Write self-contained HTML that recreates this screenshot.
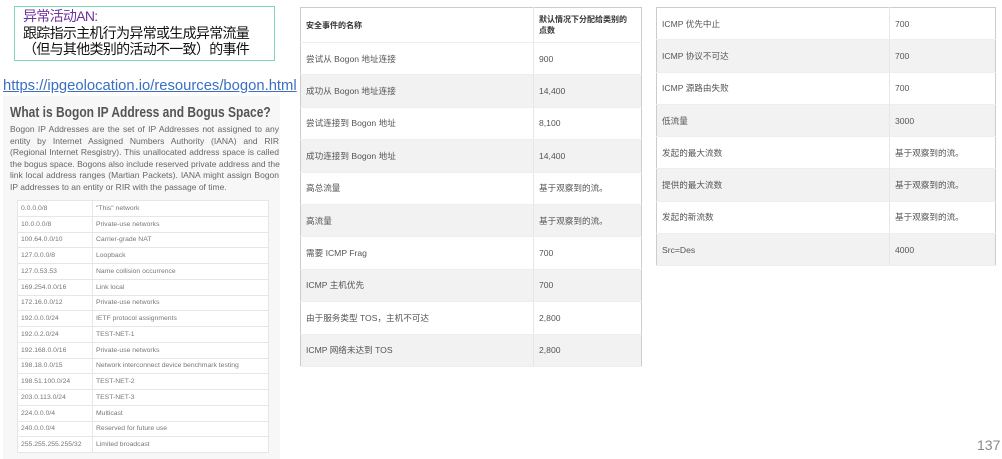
<!DOCTYPE html>
<html><head><meta charset="utf-8"><style>
*{margin:0;padding:0;box-sizing:border-box}
body{width:1002px;height:459px;background:#fff;position:relative;overflow:hidden;font-family:"Liberation Sans","Noto Sans CJK SC",sans-serif}
.box{position:absolute;left:14px;top:6px;width:261px;height:55px;border:1.5px solid #7fd6b2;padding:1px 8px;font-size:14px;line-height:16.5px;color:#111;white-space:nowrap;letter-spacing:-0.7px}
.box .p{color:#7030a0}
.link{position:absolute;left:3px;top:78px;font-size:14.8px;color:#3a6fc4;text-decoration:underline;white-space:nowrap}
.panel{position:absolute;left:3px;top:96px;width:277px;height:363px;background:#f7f7f7}
.title{position:absolute;left:10px;top:104px;font-size:12px;font-weight:bold;color:#555;white-space:nowrap;transform:scaleY(1.2);transform-origin:0 0}
.para{position:absolute;left:10px;top:124px;width:269px;font-size:8.5px;line-height:11.5px;color:#666}
.para div{text-align:justify;text-align-last:justify;white-space:nowrap}
.para div.l{text-align-last:left}
table{border-collapse:collapse;position:absolute}
.lt{left:17px;top:200px;width:252px;background:#fff;font-size:6.8px;color:#777}
.lt td{height:15.75px;border:1px solid #e6e6e6;padding-left:3px}
.lt td:first-child{width:75px}
.mt{left:300px;top:7px;width:342px;border:1.5px solid #ccc;font-size:8.6px;color:#555}
.mt td{height:32.4px;padding-left:5px;border-bottom:1px solid #eee}
.mt td:first-child{width:233px;border-right:1px solid #e6e6e6}
.mt tr.h td{height:35px;font-weight:bold;color:#333;font-size:8px}
.g td{background:#f2f2f2}
.rt{left:656px;top:7px;width:340px;border:1.5px solid #ccc;font-size:8.6px;color:#555}
.rt td{height:32.3px;padding-left:5px;border-bottom:1px solid #eee}
.rt td:first-child{width:233px;border-right:1px solid #e6e6e6}
.num{position:absolute;left:977px;top:437px;font-size:14px;color:#888}
</style></head><body>
<div class="box"><div class="p">异常活动AN:</div><div>跟踪指示主机行为异常或生成异常流量</div><div>（但与其他类别的活动不一致）的事件</div></div>
<div class="link">https://ipgeolocation.io/resources/bogon.html</div>
<div class="panel"></div>
<div class="title">What is Bogon IP Address and Bogus Space?</div>
<div class="para">
<div>Bogon IP Addresses are the set of IP Addresses not assigned to any</div>
<div>entity by Internet Assigned Numbers Authority (IANA) and RIR</div>
<div>(Regional Internet Resgistry). This unallocated address space is called</div>
<div>the bogus space. Bogons also include reserved private address and the</div>
<div>link local address ranges (Martian Packets). IANA might assign Bogon</div>
<div class="l">IP addresses to an entity or RIR with the passage of time.</div>
</div>
<table class="lt">
<tr><td>0.0.0.0/8</td><td>"This" network</td></tr>
<tr><td>10.0.0.0/8</td><td>Private-use networks</td></tr>
<tr><td>100.64.0.0/10</td><td>Carrier-grade NAT</td></tr>
<tr><td>127.0.0.0/8</td><td>Loopback</td></tr>
<tr><td>127.0.53.53</td><td>Name collision occurrence</td></tr>
<tr><td>169.254.0.0/16</td><td>Link local</td></tr>
<tr><td>172.16.0.0/12</td><td>Private-use networks</td></tr>
<tr><td>192.0.0.0/24</td><td>IETF protocol assignments</td></tr>
<tr><td>192.0.2.0/24</td><td>TEST-NET-1</td></tr>
<tr><td>192.168.0.0/16</td><td>Private-use networks</td></tr>
<tr><td>198.18.0.0/15</td><td>Network interconnect device benchmark testing</td></tr>
<tr><td>198.51.100.0/24</td><td>TEST-NET-2</td></tr>
<tr><td>203.0.113.0/24</td><td>TEST-NET-3</td></tr>
<tr><td>224.0.0.0/4</td><td>Multicast</td></tr>
<tr><td>240.0.0.0/4</td><td>Reserved for future use</td></tr>
<tr><td>255.255.255.255/32</td><td>Limited broadcast</td></tr>
</table>
<table class="mt">
<tr class="h"><td>安全事件的名称</td><td>默认情况下分配给类别的<br>点数</td></tr>
<tr><td>尝试从 Bogon 地址连接</td><td>900</td></tr>
<tr class="g"><td>成功从 Bogon 地址连接</td><td>14,400</td></tr>
<tr><td>尝试连接到 Bogon 地址</td><td>8,100</td></tr>
<tr class="g"><td>成功连接到 Bogon 地址</td><td>14,400</td></tr>
<tr><td>高总流量</td><td>基于观察到的流。</td></tr>
<tr class="g"><td>高流量</td><td>基于观察到的流。</td></tr>
<tr><td>需要 ICMP Frag</td><td>700</td></tr>
<tr class="g"><td>ICMP 主机优先</td><td>700</td></tr>
<tr><td>由于服务类型 TOS，主机不可达</td><td>2,800</td></tr>
<tr class="g"><td>ICMP 网络未达到 TOS</td><td>2,800</td></tr>
</table>
<table class="rt">
<tr><td>ICMP 优先中止</td><td>700</td></tr>
<tr class="g"><td>ICMP 协议不可达</td><td>700</td></tr>
<tr><td>ICMP 源路由失败</td><td>700</td></tr>
<tr class="g"><td>低流量</td><td>3000</td></tr>
<tr><td>发起的最大流数</td><td>基于观察到的流。</td></tr>
<tr class="g"><td>提供的最大流数</td><td>基于观察到的流。</td></tr>
<tr><td>发起的新流数</td><td>基于观察到的流。</td></tr>
<tr class="g"><td>Src=Des</td><td>4000</td></tr>
</table>
<div class="num">137</div>
</body></html>
